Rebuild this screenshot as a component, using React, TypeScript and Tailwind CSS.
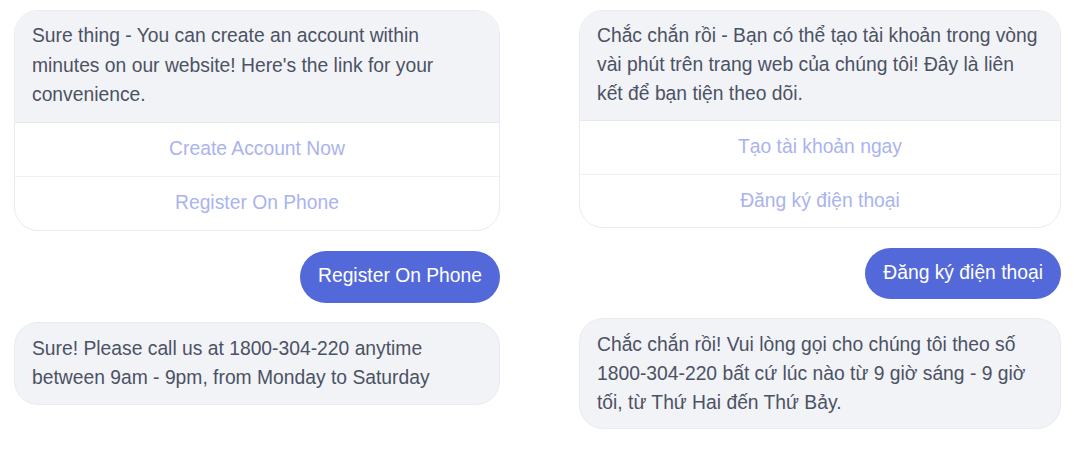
const font = { fontFamily: '"Liberation Sans", Arial, sans-serif' };

type Column = {
  intro: string;
  options: string[];
  choice: string;
  reply: string;
};

const columns: Column[] = [
  {
    intro:
      "Sure thing - You can create an account within minutes on our website! Here's the link for your convenience.",
    options: ["Create Account Now", "Register On Phone"],
    choice: "Register On Phone",
    reply:
      "Sure! Please call us at 1800-304-220 anytime between 9am - 9pm, from Monday to Saturday",
  },
  {
    intro:
      "Chắc chắn rồi - Bạn có thể tạo tài khoản trong vòng vài phút trên trang web của chúng tôi! Đây là liên kết để bạn tiện theo dõi.",
    options: ["Tạo tài khoản ngay", "Đăng ký điện thoại"],
    choice: "Đăng ký điện thoại",
    reply:
      "Chắc chắn rồi! Vui lòng gọi cho chúng tôi theo số 1800-304-220 bất cứ lúc nào từ 9 giờ sáng - 9 giờ tối, từ Thứ Hai đến Thứ Bảy.",
  },
];

// the two screenshots differ a little in scale, so sizes come per column
type Sizes = { wrap: string; text: string; row: string; pill: string; bubble: string };

const left: Sizes = {
  wrap: "ml-[14px] w-[486px]",
  text: "leading-[29.5px]",
  row: "h-[53.5px]",
  pill: "h-[52px]",
  bubble: "py-[11px]",
};

const right: Sizes = {
  wrap: "ml-[79px] w-[482px]",
  text: "leading-[29px]",
  row: "h-[53px]",
  pill: "h-[51px]",
  bubble: "py-[11px]",
};

function Chat({ col, s }: { col: Column; s: Sizes }) {
  return (
    <div className={`flex flex-col ${s.wrap}`}>
      <div className="overflow-hidden rounded-[24px] border border-[#e9ebf1] bg-white">
        <p
          className={`border-b border-[#e6e8ee] bg-[#f2f3f7] pl-[17px] pr-[20px] pt-[10px] pb-[12px] text-[19.3px] text-[#4b5264] ${s.text}`}
        >
          {col.intro}
        </p>
        {col.options.map((o, i) => (
          <button
            key={o}
            className={`flex w-full items-center justify-center text-[19.3px] text-[#aab3ee] ${s.row} ${
              i > 0 ? "border-t border-[#eef0f4]" : ""
            }`}
          >
            {o}
          </button>
        ))}
      </div>

      <div className="mt-[20px] flex justify-end">
        <span
          className={`flex items-center rounded-full bg-[#5469d9] px-[18px] text-[19.3px] text-white ${s.pill}`}
        >
          {col.choice}
        </span>
      </div>

      <p
        className={`mt-[19px] rounded-[24px] border border-[#e9ebf1] bg-[#f2f3f7] pl-[17px] pr-[20px] text-[19.3px] text-[#4b5264] ${s.text} ${s.bubble}`}
      >
        {col.reply}
      </p>
    </div>
  );
}

export default function App() {
  return (
    <div className="flex min-h-[467px] w-[1074px] bg-white pt-[10px]" style={font}>
      <Chat col={columns[0]} s={left} />
      <Chat col={columns[1]} s={right} />
    </div>
  );
}
